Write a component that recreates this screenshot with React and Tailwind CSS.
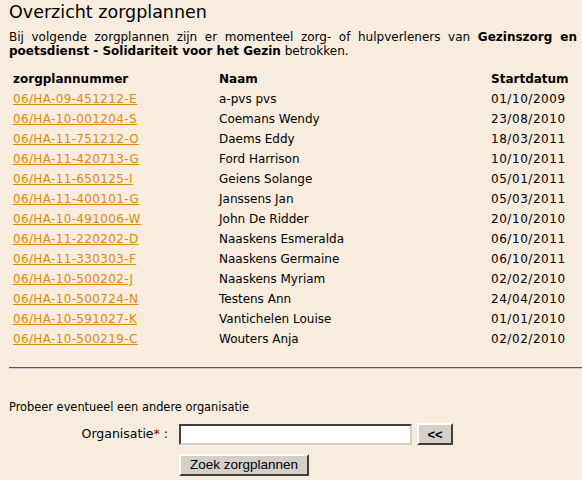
const plannen = [
  ['06/HA-09-451212-E', 'a-pvs pvs', '01/10/2009'],
  ['06/HA-10-001204-S', 'Coemans Wendy', '23/08/2010'],
  ['06/HA-11-751212-O', 'Daems Eddy', '18/03/2011'],
  ['06/HA-11-420713-G', 'Ford Harrison', '10/10/2011'],
  ['06/HA-11-650125-I', 'Geiens Solange', '05/01/2011'],
  ['06/HA-11-400101-G', 'Janssens Jan', '05/03/2011'],
  ['06/HA-10-491006-W', 'John De Ridder', '20/10/2010'],
  ['06/HA-11-220202-D', 'Naaskens Esmeralda', '06/10/2011'],
  ['06/HA-11-330303-F', 'Naaskens Germaine', '06/10/2011'],
  ['06/HA-10-500202-J', 'Naaskens Myriam', '02/02/2010'],
  ['06/HA-10-500724-N', 'Testens Ann', '24/04/2010'],
  ['06/HA-10-591027-K', 'Vantichelen Louise', '01/01/2010'],
  ['06/HA-10-500219-C', 'Wouters Anja', '02/02/2010'],
]

export default function App() {
  return (
    <div className="min-h-[480px] bg-[#f8ecdf] pl-[9px] pt-[1px] text-[12px] text-black font-['DejaVu_Sans','Verdana',sans-serif]">
      <h1 className="text-[17.5px] leading-[22px]">Overzicht zorgplannen</h1>
      <p className="mt-[7px] pr-[5px] text-justify leading-[14px]">
        Bij volgende zorgplannen zijn er momenteel zorg- of hulpverleners van{' '}
        <b>Gezinszorg en poetsdienst - Solidariteit voor het Gezin</b> betrokken.
      </p>

      <div className="mt-[11px] pl-[4px]">
        <div className="grid h-[20px] grid-cols-[206px_272px_1fr] items-center font-bold">
          <span>zorgplannummer</span>
          <span>Naam</span>
          <span>Startdatum</span>
        </div>
        {plannen.map(([nr, naam, datum]) => (
          <div key={nr} className="grid h-[20px] grid-cols-[206px_272px_1fr] items-center">
            <a href="#" className="text-[#e08c00] underline tracking-[0.35px]">{nr}</a>
            <span>{naam}</span>
            <span className="tracking-[0.55px]">{datum}</span>
          </div>
        ))}
      </div>

      <div className="mt-[18px] h-[2px] border-t border-[#555] border-b border-b-[#ccc]" />

      <p className="mt-[31px] text-[11.4px] leading-[14px]">Probeer eventueel een andere organisatie</p>

      <div className="mt-[9px] flex items-center">
        <label className="w-[161px] pr-[2px] text-right text-[12.5px]">
          Organisatie<span className="text-[#8b0000]">*</span> :
        </label>
        <input
          type="text"
          className="ml-[9px] h-[21px] w-[233px] bg-white border-2 border-t-[#404040] border-l-[#404040] border-r-[#d4d0c8] border-b-[#d4d0c8] outline-none"
        />
        <button className="ml-[5px] h-[22px] w-[36px] bg-[#d4d0c8] border-2 border-t-white border-l-white border-r-[#404040] border-b-[#404040] text-[13px] font-bold leading-none font-['Liberation_Sans','Arial',sans-serif]">
          &lt;&lt;
        </button>
      </div>

      <div className="mt-[9px] pl-[170px] font-['Liberation_Sans','Arial',sans-serif]">
        <button className="h-[22px] w-[130px] bg-[#d4d0c8] border-2 border-t-white border-l-white border-r-[#404040] border-b-[#404040] text-[13.5px] leading-none">
          Zoek zorgplannen
        </button>
      </div>
    </div>
  )
}
